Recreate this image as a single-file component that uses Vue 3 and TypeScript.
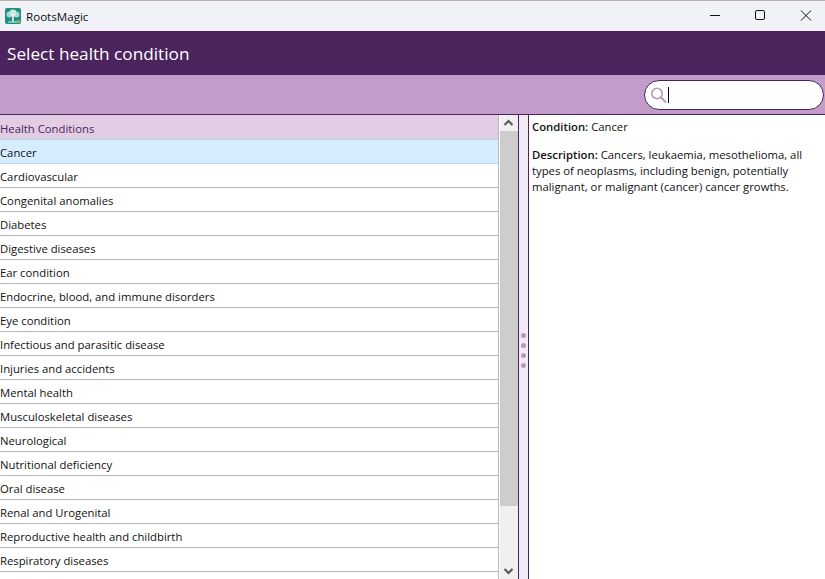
<script setup lang="ts">
const conditions: string[] = [
  'Cardiovascular', 'Congenital anomalies', 'Diabetes', 'Digestive diseases', 'Ear condition',
  'Endocrine, blood, and immune disorders', 'Eye condition', 'Infectious and parasitic disease',
  'Injuries and accidents', 'Mental health', 'Musculoskeletal diseases', 'Neurological',
  'Nutritional deficiency', 'Oral disease', 'Renal and Urogenital',
  'Reproductive health and childbirth', 'Respiratory diseases',
]
</script>

<template>
  <div class="window">
    <div class="titlebar">
      <svg class="logo" width="16" height="16" viewBox="0 0 16 16">
        <rect width="16" height="16" rx="2" fill="#1f8f82" />
        <circle cx="4.5" cy="6.5" r="3" fill="#a9d8cf" />
        <circle cx="11.5" cy="6.5" r="3" fill="#a9d8cf" />
        <circle cx="8" cy="5" r="3.4" fill="#cfe9e3" />
        <path d="M7.2 6h1.6v8H7.2z" fill="#eef8f5" />
        <path d="M3 14h9" stroke="#d8eee9" />
        <rect x="12" y="12" width="3" height="3" fill="#8cae6c" />
      </svg>
      <span class="app-name">RootsMagic</span>
      <div class="win-controls">
        <svg width="46" height="30" viewBox="0 0 46 30"><path d="M23 14.5h10" stroke="#111" stroke-width="1" /></svg>
        <svg width="46" height="30" viewBox="0 0 46 30"><rect x="22.5" y="9.5" width="9" height="9" rx="1.5" fill="none" stroke="#111" /></svg>
        <svg width="46" height="30" viewBox="0 0 46 30"><path d="M22 9.5l10 10M32 9.5l-10 10" stroke="#111" /></svg>
      </div>
    </div>
    <div class="header">Select health condition</div>
    <div class="toolbar">
      <div class="search">
        <svg width="18" height="18" viewBox="0 0 18 18">
          <circle cx="7" cy="7.5" r="5.2" fill="none" stroke="#b79ac0" stroke-width="1.6" />
          <path d="M11 11.5l5 5" stroke="#b79ac0" stroke-width="2" />
        </svg>
        <span class="caret"></span>
      </div>
    </div>
    <div class="main">
      <div class="list">
        <div class="list-head">Health Conditions</div>
        <div class="row selected">Cancer</div>
        <div v-for="c in conditions" :key="c" class="row">{{ c }}</div>
      </div>
      <div class="scrollbar">
        <svg class="arrow" width="17" height="16" viewBox="0 0 17 16"><path d="M4.5 10l4-4 4 4" fill="none" stroke="#555" stroke-width="2" /></svg>
        <div class="thumb"></div>
        <div class="track"></div>
        <svg class="arrow" width="17" height="16" viewBox="0 0 17 16"><path d="M4.5 6l4 4 4-4" fill="none" stroke="#555" stroke-width="2" /></svg>
      </div>
      <div class="splitter">
        <i></i><i></i><i></i><i></i>
      </div>
      <div class="detail">
        <p><b>Condition:</b> Cancer</p>
        <p><b>Description:</b> Cancers, leukaemia, mesothelioma, all types of neoplasms, including benign, potentially malignant, or malignant (cancer) cancer growths.</p>
      </div>
    </div>
  </div>
</template>

<style>
html, body { margin: 0; overflow: hidden; }
</style>

<style scoped>
.window {
  width: 825px;
  height: 579px;
  display: flex;
  flex-direction: column;
  overflow: hidden;
  background: #fff;
  font-family: "Open Sans", "Noto Sans", sans-serif;
  font-size: 11.3px;
  color: #111;
}
.titlebar {
  height: 30px;
  flex: none;
  display: flex;
  align-items: center;
  background: #f0f2f7;
  border-top: 1px solid #b4b4b4;
  padding-left: 5px;
}
.logo { margin-right: 5px; }
.app-name { font-size: 11.6px; }
.win-controls { margin-left: auto; display: flex; height: 30px; }
.header {
  height: 44px;
  flex: none;
  display: flex;
  align-items: center;
  padding-left: 7px;
  background: #4b245d;
  color: #fff;
  font-size: 17.2px;
}
.toolbar {
  height: 40px;
  flex: none;
  display: flex;
  align-items: center;
  justify-content: flex-end;
  padding-right: 1px;
  box-sizing: border-box;
  background: #c29dc9;
  border-bottom: 1px solid #4b245d;
}
.search {
  width: 180px;
  height: 30px;
  box-sizing: border-box;
  display: flex;
  align-items: center;
  gap: 0;
  padding-left: 5px;
  background: #fff;
  border: 1px solid #4b245d;
  border-radius: 15px;
}
.caret { width: 1px; height: 16px; background: #000; }
.main { flex: 1; min-height: 0; display: flex; }
.list { width: 499px; flex: none; border-right: 1px solid #b9b9b9; box-sizing: border-box; }
.list-head {
  height: 25px;
  padding-top: 2px;
  line-height: 24px;
  background: #e2cde4;
  color: #4b245d;
  border-bottom: 1px solid #a6dcdc;
  box-sizing: border-box;
}
.row {
  height: 24px;
  padding-top: 1px;
  line-height: 24px;
  box-sizing: border-box;
  border-bottom: 1px solid #b9b9b9;
}
.selected { background: #d6edff; border-bottom-color: #b5d7f0; }
.scrollbar {
  width: 20px;
  flex: none;
  display: flex;
  flex-direction: column;
  background: #f0f0f0;
  align-items: flex-start;
  margin-left: 1px;
  margin-right: -1px;
}
.arrow { flex: none; }
.thumb { height: 375px; width: 19px; background: #cdcdcd; flex: none; }
.track { flex: 1; }
.splitter {
  width: 11px;
  flex: none;
  box-sizing: border-box;
  margin-left: -1px;
  padding-top: 6px;
  background: #f2eaf5;
  border-left: 1px solid #4b245d;
  border-right: 1px solid #4b245d;
  display: flex;
  flex-direction: column;
  align-items: center;
  justify-content: center;
  gap: 5px;
}
.splitter i { width: 5px; height: 5px; border-radius: 50%; background: #b79ac0; }
.detail { flex: 1; padding: 4px 6px 0 3px; }
.detail p { margin: 0 0 12px; line-height: 16px; }
.detail b { font-weight: 600; }
</style>
